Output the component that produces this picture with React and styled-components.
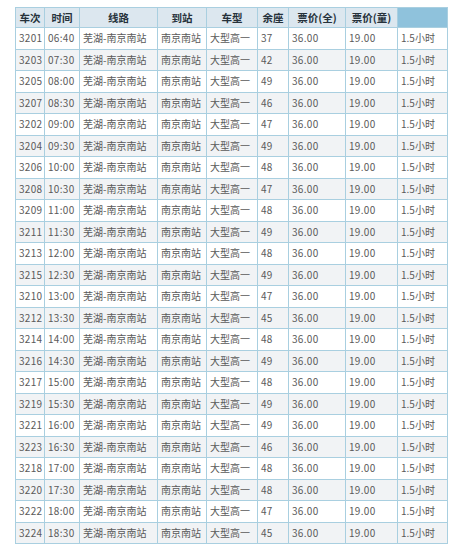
import React from "react";
import styled, { createGlobalStyle } from "styled-components";

const GlobalStyle = createGlobalStyle`
  html, body {
    margin: 0;
    padding: 0;
    background: #ffffff;
  }
  body {
    font-family: "Noto Sans CJK SC", "DejaVu Sans", sans-serif;
  }
`;

const Page = styled.div`
  padding: 7px 3px 0 15px;
  width: 450px;
  box-sizing: border-box;
`;

const Table = styled.table`
  width: 432px;
  table-layout: fixed;
  border-collapse: collapse;
  border: 1px solid #a9cfe0;
  font-size: 10px;
  color: #5a5a5a;
`;

const HeadCell = styled.th`
  height: 19px;
  padding: 0;
  text-align: center;
  font-weight: bold;
  font-size: 10.5px;
  color: #26323b;
  background: ${(p) => (p.$blank ? "#8fc2dc" : "#dce7ef")};
  border: 1px solid #a9cfe0;
  white-space: nowrap;
`;

const Row = styled.tr`
  height: 21.5px;
  background: ${(p) => (p.$alt ? "#f1f3f5" : "#ffffff")};
`;

const Cell = styled.td`
  padding: 0 0 0 3px;
  border: 1px solid #a9cfe0;
  white-space: nowrap;
  overflow: hidden;
  line-height: 1;
  letter-spacing: ${(p) => (p.$num ? "0.3px" : "0")};
`;

const widths = [29, 35, 78, 49, 51, 31, 57, 52, 50];
const headers = ["车次", "时间", "线路", "到站", "车型", "余座", "票价(全)", "票价(童)", ""];

const trips = [
  ["3201", "06:40", "37"],
  ["3203", "07:30", "42"],
  ["3205", "08:00", "49"],
  ["3207", "08:30", "46"],
  ["3202", "09:00", "47"],
  ["3204", "09:30", "49"],
  ["3206", "10:00", "48"],
  ["3208", "10:30", "47"],
  ["3209", "11:00", "48"],
  ["3211", "11:30", "49"],
  ["3213", "12:00", "48"],
  ["3215", "12:30", "49"],
  ["3210", "13:00", "47"],
  ["3212", "13:30", "45"],
  ["3214", "14:00", "48"],
  ["3216", "14:30", "49"],
  ["3217", "15:00", "48"],
  ["3219", "15:30", "49"],
  ["3221", "16:00", "49"],
  ["3223", "16:30", "46"],
  ["3218", "17:00", "48"],
  ["3220", "17:30", "48"],
  ["3222", "18:00", "47"],
  ["3224", "18:30", "45"],
];

const App = () => {
  return (
    <Page>
      <GlobalStyle />
      <Table>
        <colgroup>
          {widths.map((w, i) => (
            <col key={i} style={{ width: w }} />
          ))}
        </colgroup>
        <thead>
          <tr>
            {headers.map((h, i) => (
              <HeadCell key={i} $blank={h === ""}>
                {h}
              </HeadCell>
            ))}
          </tr>
        </thead>
        <tbody>
          {trips.map(([no, time, seats], i) => (
            <Row key={no} $alt={i % 2 === 1}>
              <Cell $num>{no}</Cell>
              <Cell $num>{time}</Cell>
              <Cell>芜湖-南京南站</Cell>
              <Cell>南京南站</Cell>
              <Cell>大型高一</Cell>
              <Cell $num>{seats}</Cell>
              <Cell $num>36.00</Cell>
              <Cell $num>19.00</Cell>
              <Cell>1.5小时</Cell>
            </Row>
          ))}
        </tbody>
      </Table>
    </Page>
  );
};

export default App;
